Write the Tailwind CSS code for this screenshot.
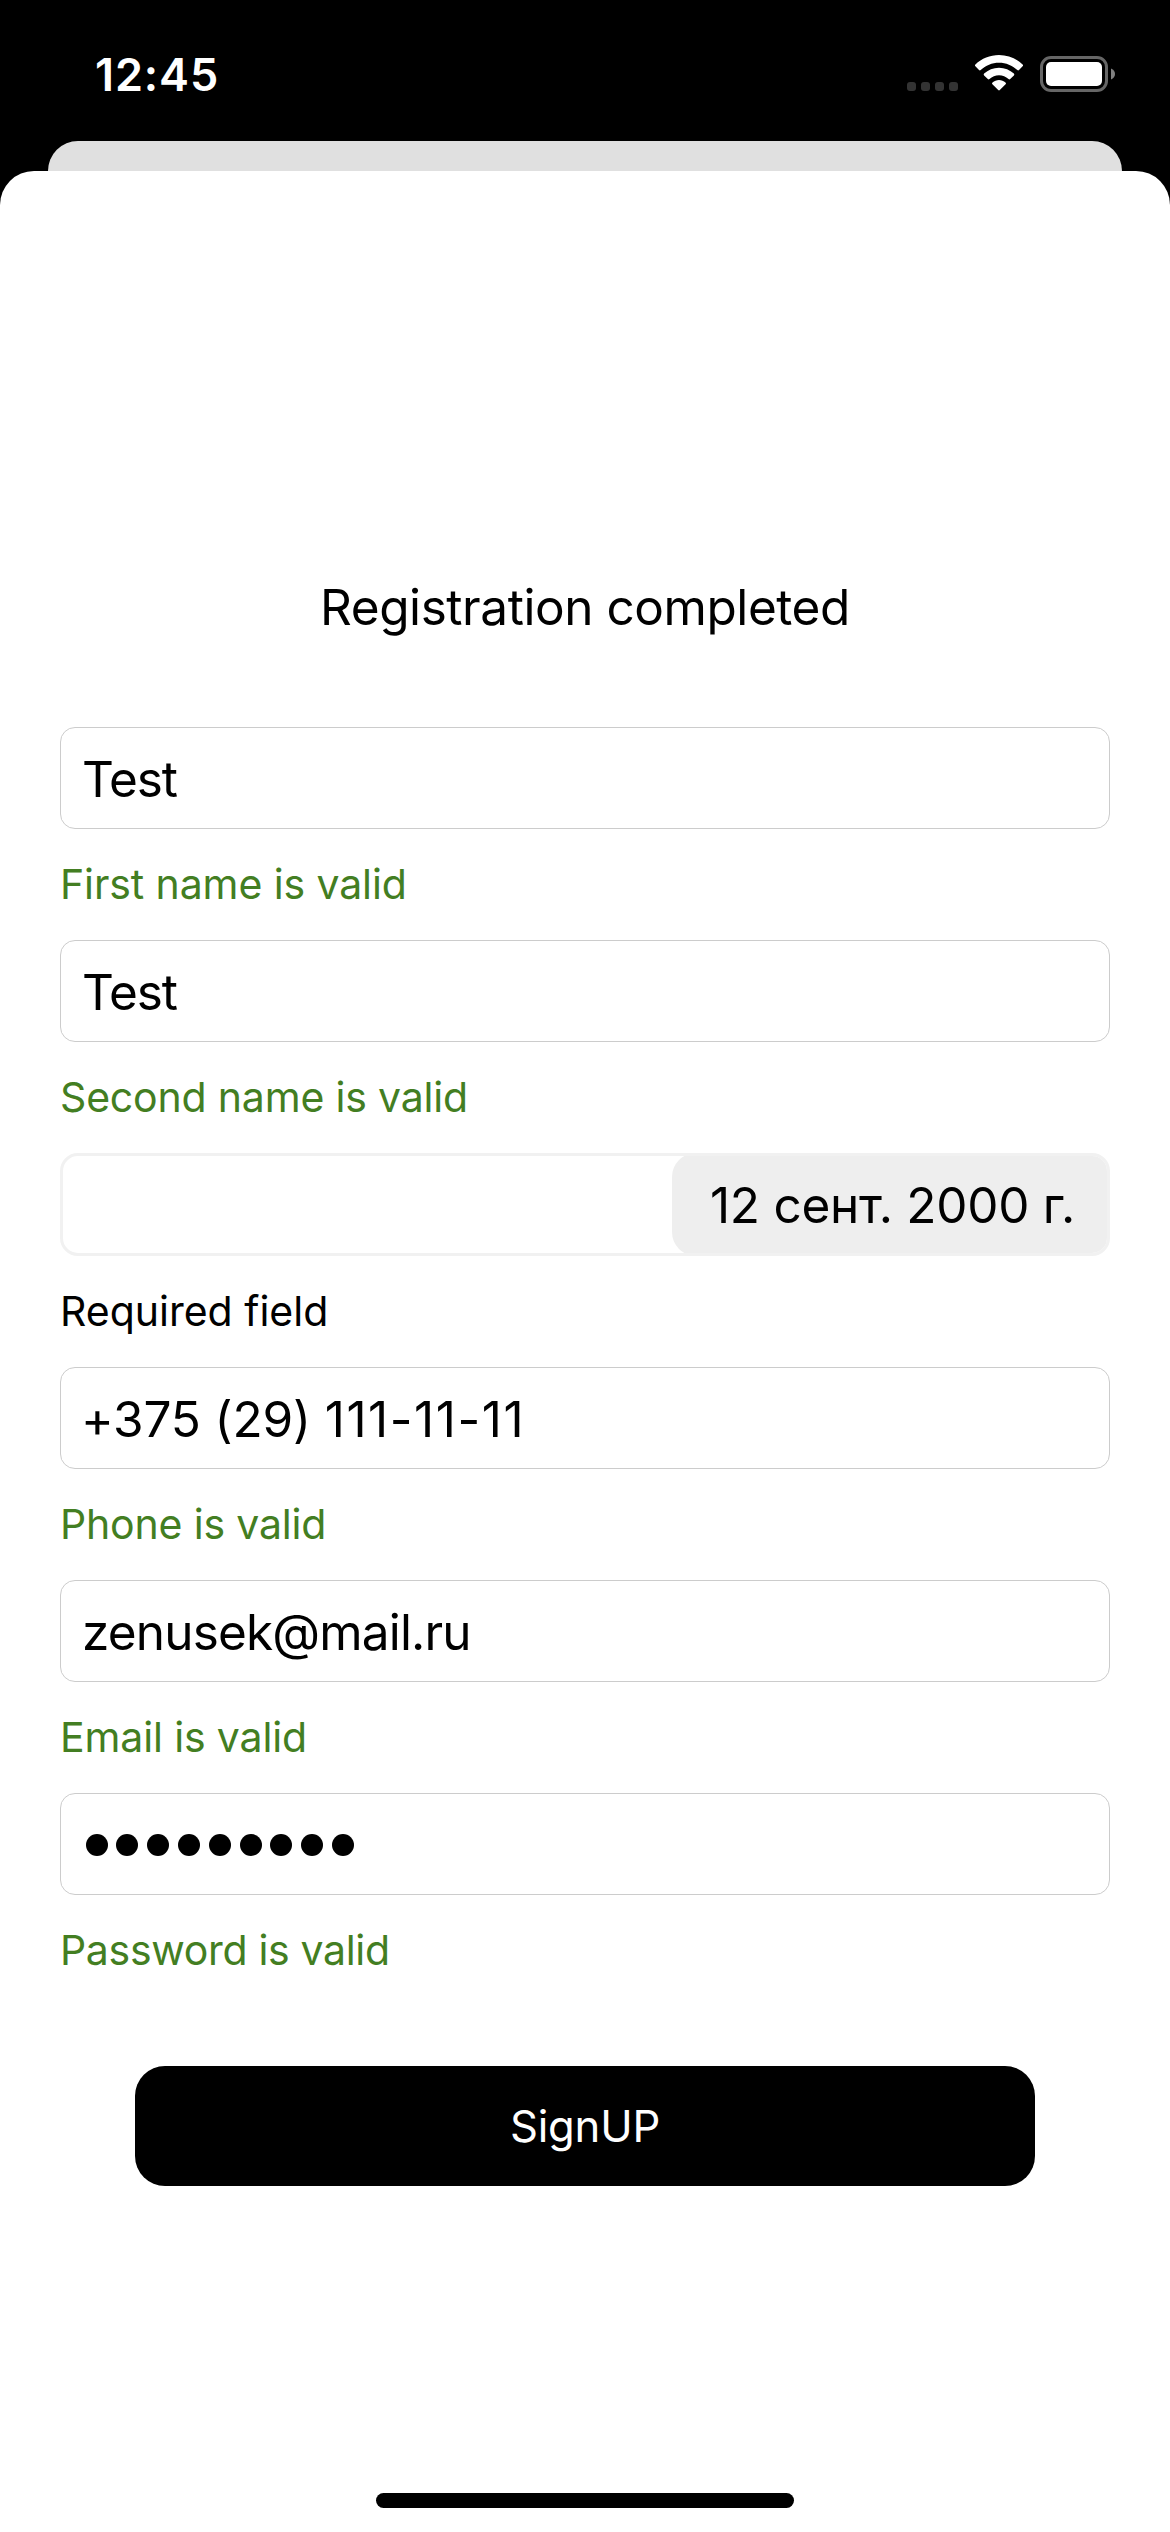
<!DOCTYPE html>
<html lang="en">
<head>
<meta charset="utf-8">
<title>Registration</title>
<script src="https://cdn.jsdelivr.net/npm/@tailwindcss/browser@4"></script>
</head>
<body class="bg-black">
<div class="w-[1170px] h-[2532px] overflow-hidden bg-black text-black flex flex-col font-['Inter','Liberation_Sans',sans-serif]">
  <!-- Status bar -->
  <header class="h-[141px] shrink-0 flex items-start justify-between pt-[47px] pl-[95px] pr-[55px] text-white">
    <span class="text-[45px] leading-[55px] font-semibold tracking-[0.9px]">12:45</span>
    <div class="flex items-start pt-2">
      <div class="flex gap-[5px] pt-[27px] mr-[17px]">
        <i class="size-[9px] rounded-[3px] bg-[#333]"></i>
        <i class="size-[9px] rounded-[3px] bg-[#333]"></i>
        <i class="size-[9px] rounded-[3px] bg-[#333]"></i>
        <i class="size-[9px] rounded-[3px] bg-[#333]"></i>
      </div>
      <svg class="w-[48px] h-[36px] mr-[17px]" viewBox="0 0 48 36" fill="#fff">
        <path d="M24 0C33 0 41.300 3.500 47.600 9.500Q48.500 10.400 47.600 11.300L44 15Q43.200 15.800 42.300 15C37.300 10.400 31 7.700 24 7.700S10.700 10.400 5.700 15Q4.800 15.800 4 15L.4 11.300Q-.5 10.400 .4 9.500C6.700 3.500 15 0 24 0Z"/>
        <path d="M24 12.700C29.700 12.700 34.900 14.900 38.900 18.600Q39.800 19.500 38.900 20.400L35.200 24Q34.400 24.800 33.500 24C30.900 21.700 27.600 20.300 24 20.300S17.100 21.700 14.500 24Q13.600 24.800 12.800 24L9.100 20.400Q8.200 19.500 9.100 18.600C13.100 14.900 18.300 12.700 24 12.700Z"/>
        <path d="M24 25C26.400 25 28.700 25.900 30.500 27.400Q31.500 28.300 30.600 29.200L24.800 35.100Q24 35.900 23.200 35.100L17.400 29.200Q16.500 28.300 17.500 27.400C19.300 25.900 21.600 25 24 25Z"/>
      </svg>
      <svg class="w-[75px] h-[36px] mt-px" viewBox="0 0 75 36">
        <rect x="1.500" y="1.500" width="65" height="33" rx="9.500" fill="none" stroke="#666" stroke-width="3"/>
        <rect x="6" y="6" width="56" height="24" rx="5" fill="#fff"/>
        <path d="M71 12.500C73.600 13.500 75 15.600 75 18S73.600 22.500 71 23.500Z" fill="#808080"/>
      </svg>
    </div>
  </header>

  <!-- Edge of the screen underneath -->
  <div class="h-[30px] mx-12 shrink-0 rounded-t-[30px] bg-[#e0e0e0]"></div>

  <!-- Sheet -->
  <main class="flex-1 flex flex-col items-center bg-white rounded-t-[34px]">
    <h1 class="mt-[406px] text-[49.5px] leading-[60px] tracking-[-0.44px]">Registration completed</h1>

    <form class="mt-[90px] w-[1050px] flex flex-col text-[49.5px] leading-[60px]">
      <div class="h-[102px] border border-[#ccc] rounded-[15px] flex items-center pl-[21px] pt-0.5 tracking-[-1.1px]">Test</div>
      <p class="text-[41px] leading-[110px] mb-px text-[#437e22] tracking-[-0.1px]">First name is valid</p>

      <div class="h-[102px] border border-[#ccc] rounded-[15px] flex items-center pl-[21px] pt-0.5 tracking-[-1.1px]">Test</div>
      <p class="text-[41px] leading-[110px] mb-px text-[#437e22] tracking-[-0.18px]">Second name is valid</p>

      <div class="h-[103px] rounded-[18px] overflow-hidden border-[3px] border-[#f1f1f1] flex justify-end">
        <div class="w-[438px] -my-[3px] -mr-[3px] pt-px pl-[38px] rounded-[24px] bg-[#eee] flex items-center tracking-[-0.27px] whitespace-nowrap">12 сент. 2000 г.</div>
      </div>
      <p class="text-[41px] leading-[110px] mb-px">Required field</p>

      <div class="h-[102px] border border-[#ccc] rounded-[15px] flex items-center pl-5 pt-0.5 whitespace-pre"><span class="tracking-[-0.15px]">+375 (29) </span><span class="tracking-[1.55px]">111-11-11</span></div>
      <p class="text-[41px] leading-[110px] mb-px text-[#437e22] tracking-[-0.17px]">Phone is valid</p>

      <div class="h-[102px] border border-[#ccc] rounded-[15px] flex items-center pl-[21px] pt-0.5 tracking-[-0.83px]">zenusek@mail.ru</div>
      <p class="text-[41px] leading-[110px] mb-px text-[#437e22] tracking-[-0.14px]">Email is valid</p>

      <div class="h-[102px] border border-[#ccc] rounded-[15px] flex items-center pl-[25px] pt-[2px]">
        <svg class="w-[268px] h-[22px]" viewBox="0 0 268 22">
          <circle cx="11" cy="11" r="11"/><circle cx="41" cy="11" r="11"/><circle cx="72" cy="11" r="11"/>
          <circle cx="103" cy="11" r="11"/><circle cx="134" cy="11" r="11"/><circle cx="165" cy="11" r="11"/>
          <circle cx="195" cy="11" r="11"/><circle cx="226" cy="11" r="11"/><circle cx="257" cy="11" r="11"/>
        </svg>
      </div>
      <p class="text-[41px] leading-[110px] mb-px text-[#437e22] tracking-[-0.32px]">Password is valid</p>
    </form>

    <button class="mt-[60px] w-[900px] h-[120px] pt-px rounded-[30px] bg-black text-white text-[43.6px] tracking-[-0.19px]">SignUP</button>

    <div class="mt-auto mb-6 w-[418px] h-[15px] rounded-full bg-black"></div>
  </main>
</div>
</body>
</html>
